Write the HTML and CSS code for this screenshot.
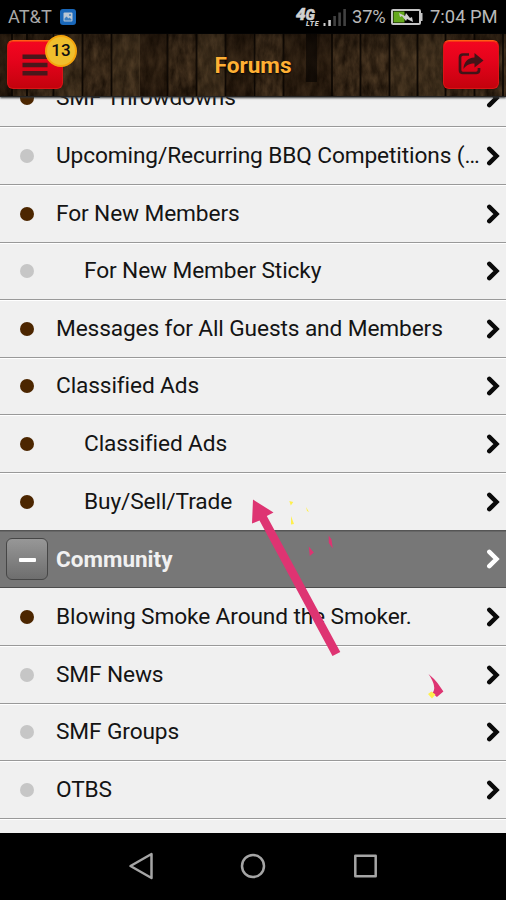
FILE: index.html
```
<!DOCTYPE html>
<html lang="en">
<head>
<meta charset="utf-8">
<title>Forums</title>
<link rel="stylesheet" href="styles.css">
</head>
<body>
<div class="phone">
  <div class="status">
    <span class="carrier">AT&amp;T</span>
    <svg class="photo" width="16" height="16" viewBox="0 0 16 16"><rect width="16" height="16" rx="3" fill="#1967b9"/><rect x="3.5" y="3.5" width="9" height="9" rx="1" fill="#b9c6d4"/><path d="M4.5 11.5v-2l2-2 2 2 1-1 2 2v1z" fill="#3d7fc0"/><circle cx="10" cy="6" r="1" fill="#3d7fc0"/></svg>
    <span class="network"><b class="gen">4<small>G</small></b><i class="lte">LTE</i></span>
    <svg class="signal" width="24" height="17" viewBox="0 0 24 17"><path d="M.5 14h2v3h-2zM5.3 11h2.5v6H5.3z" fill="#ccc"/><path d="M10.3 7h2.6v10h-2.6zM15.3 3.500h2.600v13.500h-2.600zM20.300 0h2.600v17h-2.600z" fill="#414141"/></svg>
    <span class="percent">37%</span>
    <svg class="battery" width="32" height="16" viewBox="0 0 32 16"><rect x="1" y="1" width="28" height="14" rx="1" fill="#000" stroke="#c5c5c5" stroke-width="2"/><rect x="2.500" y="2.500" width="11" height="11" fill="#65a91d"/><path d="M30 4h1.500v8H30z" fill="#c5c5c5"/><path d="M8 4l6 3 1-3 4 5 2-1 1 5-6-3-1 2-4-5-2 1z" fill="#d0d0d0"/></svg>
    <span class="clock">7:04 PM</span>
  </div>
  <header class="bar">
    <svg class="wood" width="506" height="62" viewBox="0 0 506 62">
      <defs>
        <filter id="grain" x="0" y="0" width="100%" height="100%" color-interpolation-filters="sRGB">
          <feTurbulence type="fractalNoise" baseFrequency="0.14 0.06" numOctaves="4" seed="8"/>
          <feColorMatrix values="0.3 0 0 0 0.05  0.24 0 0 0 0.02  0.17 0 0 0 -0.005  0 0 0 0 1"/>
        </filter>
        <linearGradient id="shade" x2="0" y2="1"><stop stop-color="#000" stop-opacity=".22"/><stop offset=".5" stop-color="#4a3a26" stop-opacity=".1"/><stop offset="1" stop-color="#000" stop-opacity=".08"/></linearGradient>
      </defs>
      <rect width="506" height="62" filter="url(#grain)"/>
      <path d="M0 0h12v62H0zM139 0h28v62h-28zM225 0h28v62h-28zM283 0h49v62h-49z" fill="#160a02" opacity=".38"/>
      <path d="M111 0h28v62h-28zM196 0h29v62h-29zM389 0h56v62h-56zM53 0h29v62H53z" fill="#68543a" opacity=".16"/>
      <path d="M306 0h11v48h-11z" fill="#080401" opacity=".75"/>
      <path d="M12 0v62M27 0v62M53.500 0v62M82.500 0v62M111.500 0v62M167.500 0v62M196.500 0v62M225.500 0v62M254.500 0v62M283.500 0v62M332 0v62M360.500 0v62M389.500 0v62M417.500 0v62M445.500 0v62M474.500 0v62M503 0v62" stroke="#0c0602" stroke-width="1.800"/>
      <path d="M139.500 0v62" stroke="#5b4930" opacity=".5"/>
      <rect width="506" height="62" fill="url(#shade)"/>
    </svg>
    <div class="button menu"><svg width="26" height="22" viewBox="0 0 26 22"><path d="M.5 .5h25v4.500h-25zM.5 8.800h25v4.500h-25zM.5 17h25v4.500h-25z" fill="#4a171b"/></svg><span class="badge">13</span></div>
    <h1>Forums</h1>
    <div class="button share"><svg width="28" height="24" viewBox="0 0 28 24"><path d="M12 2.500H6Q3 2.500 3 5.500v12.500q0 3 3 3h13q3 0 3-3v-2" fill="none" stroke="#421418" stroke-width="2.700"/><path d="M17.500 1l9 7.500-9 7v-4c-5 0-8 1.500-11 5.500 0-6 4-11.500 11-11.500z" fill="#421418"/></svg></div>
  </header>
  <main class="viewport">
    <div class="list">
      <div class="row"><i class="dot new"></i><span>SMF Throwdowns</span><svg class="chev" viewBox="0 0 14 20"><path d="M3.300 2.800l7.200 7.200-7.200 7.200"/></svg></div>
      <div class="row"><i class="dot"></i><span>Upcoming/Recurring BBQ Competitions (…</span><svg class="chev" viewBox="0 0 14 20"><path d="M3.300 2.800l7.200 7.200-7.200 7.200"/></svg></div>
      <div class="row"><i class="dot new"></i><span>For New Members</span><svg class="chev" viewBox="0 0 14 20"><path d="M3.300 2.800l7.200 7.200-7.200 7.200"/></svg></div>
      <div class="row sub"><i class="dot"></i><span>For New Member Sticky</span><svg class="chev" viewBox="0 0 14 20"><path d="M3.300 2.800l7.200 7.200-7.200 7.200"/></svg></div>
      <div class="row"><i class="dot new"></i><span>Messages for All Guests and Members</span><svg class="chev" viewBox="0 0 14 20"><path d="M3.300 2.800l7.200 7.200-7.200 7.200"/></svg></div>
      <div class="row"><i class="dot new"></i><span>Classified Ads</span><svg class="chev" viewBox="0 0 14 20"><path d="M3.300 2.800l7.200 7.200-7.200 7.200"/></svg></div>
      <div class="row sub"><i class="dot new"></i><span>Classified Ads</span><svg class="chev" viewBox="0 0 14 20"><path d="M3.300 2.800l7.200 7.200-7.200 7.200"/></svg></div>
      <div class="row sub last"><i class="dot new"></i><span>Buy/Sell/Trade</span><svg class="chev" viewBox="0 0 14 20"><path d="M3.300 2.800l7.200 7.200-7.200 7.200"/></svg></div>
      <div class="row section"><div class="collapse"><i></i></div><span>Community</span><svg class="chev" viewBox="0 0 14 20"><path d="M3.300 2.800l7.200 7.200-7.200 7.200"/></svg></div>
      <div class="row"><i class="dot new"></i><span>Blowing Smoke Around the Smoker.</span><svg class="chev" viewBox="0 0 14 20"><path d="M3.300 2.800l7.200 7.200-7.200 7.200"/></svg></div>
      <div class="row"><i class="dot"></i><span>SMF News</span><svg class="chev" viewBox="0 0 14 20"><path d="M3.300 2.800l7.200 7.200-7.200 7.200"/></svg></div>
      <div class="row"><i class="dot"></i><span>SMF Groups</span><svg class="chev" viewBox="0 0 14 20"><path d="M3.300 2.800l7.200 7.200-7.200 7.200"/></svg></div>
      <div class="row"><i class="dot"></i><span>OTBS</span><svg class="chev" viewBox="0 0 14 20"><path d="M3.300 2.800l7.200 7.200-7.200 7.200"/></svg></div>
    </div>
  </main>
  <nav class="nav">
    <svg width="26" height="28" viewBox="0 0 26 28"><path d="M23.500 2v24L2.500 14z"/></svg>
    <svg width="26" height="28" viewBox="0 0 26 28"><circle cx="13" cy="14" r="11"/></svg>
    <svg width="26" height="28" viewBox="0 0 26 28"><rect x="2.300" y="3.800" width="20.400" height="20.400"/></svg>
  </nav>
  <svg class="marks" width="506" height="900" viewBox="0 0 506 900">
    <g fill="#de3472"><path d="M253 499.500L273.500 512.500 266.800 516 340.300 652 332.500 656 259.500 520.500 252 523.500z"/><path d="M308.800 546.500l5 6-4 3.500zM328.700 535.500l2.800 4 1.300 9-4-5.500zM428.500 674q6 5 9 9l5.900 8.500-6.500 5.500-4.500-4q5-6-3.900-19z"/></g>
    <g fill="#fff04d"><path d="M289.300 501l4 1-2.500 3.500zM306 507l3 5-2-1zM291 516l3 8-3 .5zM428 694l3.500-2.500 4 3-3.500 4z"/></g>
  </svg>
</div>
</body>
</html>
```
FILE: styles.css
```
* { box-sizing: border-box; }
body { margin: 0; background: #000; font-family: Roboto, sans-serif; }
.phone { position: relative; width: 506px; height: 900px; display: flex; flex-direction: column; overflow: hidden; }
.phone svg { display: block; flex: none; }
.status { height: 34px; flex: none; display: flex; align-items: center; padding: 0 8px; background: #000; color: #b9b9b9; font-size: 18.400px; line-height: 34px; white-space: nowrap; }
.carrier { width: 52px; font-size: 18.200px; color: #a9a9a9; }
.network { margin-left: auto; width: 27px; height: 20px; display: flex; flex-direction: column; color: #d0d0d0; font-style: italic; }
.gen { font-size: 17px; font-weight: 900; line-height: 14px; height: 14px; -webkit-text-stroke: .6px #d0d0d0; }
.gen small { font-size: 14px; }
.lte { margin-left: 10px; font-size: 7px; line-height: 7px; font-weight: 900; letter-spacing: .8px; }
.percent { margin-left: 5px; width: 38px; letter-spacing: -.2px; }
.battery { margin-left: 1px; }
.clock { margin-left: 7px; width: 68px; }
.bar { position: relative; z-index: 1; height: 63px; flex: none; display: flex; align-items: flex-start; justify-content: space-between; padding: 6px 7px 0; border-bottom: 1px solid #242424; box-shadow: 0 1px 2px #333; background: #241910; }
.wood { position: absolute; inset: 0; }
.bar h1 { position: relative; margin: 9px 0 0; color: #ffb034; font-size: 22.600px; line-height: 34px; font-weight: 700; text-shadow: 0 1px 2px #000; }
.button { position: relative; display: flex; justify-content: center; width: 56px; height: 49px; border-radius: 6px; border: 1px solid #d91515; border-top-color: #ff5c16; background: linear-gradient(#f40620, #e3031b 45%, #c4020d); box-shadow: inset 0 1px #f63415, 0 0 1px #300; }
.menu svg { margin-top: 13px; }
.share svg { margin-top: 11px; }
.badge { position: absolute; left: 37px; top: -6px; width: 32px; height: 32px; border-radius: 50%; border: 2px solid #f5a50d; background: #efbf2d; color: #111; font-size: 17px; line-height: 27px; font-weight: 500; text-align: center; }
.viewport { height: 735.500px; flex: none; overflow: hidden; background: #f0f0f0; }
.list { margin-top: -27.400px; }
.row { height: 57.650px; display: flex; align-items: center; padding: .6px 6px 0 20px; border-bottom: 1px solid #999; box-shadow: 0 1px #fff; color: #141414; font-size: 22.700px; letter-spacing: -.12px; line-height: 30px; white-space: nowrap; }
.dot { flex: none; width: 14px; height: 14px; margin-right: 22px; border-radius: 50%; background: #c6c6c6; }
.dot.new { background: #4c2600; }
.sub span { margin-left: 28px; }
.chev { width: 14px; height: 20px; margin-left: auto; fill: none; stroke: #0a0a0a; stroke-width: 4.500; stroke-linecap: round; }
.last { border-color: #555; }
.section { position: relative; padding-top: 0; background: #777; color: #f1f1f1; font-weight: 700; font-size: 22.500px; letter-spacing: 0; padding-left: 6px; border-color: #4d4d4d; box-shadow: inset 0 1px #666; }
.section .chev { stroke: #fff; }
.collapse { width: 42px; height: 42px; flex: none; display: grid; place-items: center; margin-right: 8px; border: 1.500px solid #464646; border-radius: 6px; background: linear-gradient(#979797, #6e6e6e); }
.collapse i { width: 17px; height: 4px; margin-top: 2px; border-radius: 1px; background: #fff; }
.nav { flex: 1; display: flex; justify-content: center; gap: 86.500px; padding-top: 19.500px; background: #000; }
.nav svg { fill: none; stroke: #a5a5a5; stroke-width: 2.500; stroke-linejoin: round; }
.marks { position: absolute; left: 0; top: 0; z-index: 2; }
```
